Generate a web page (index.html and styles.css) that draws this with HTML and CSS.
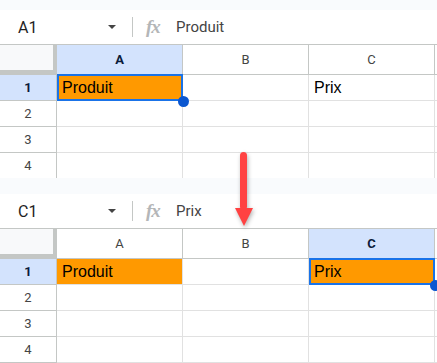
FILE: index.html
```html
<!DOCTYPE html>
<html lang="fr">
<head>
    <meta charset="UTF-8">
    <title>Feuille - sélection</title>
    <link rel="stylesheet" href="styles.css">
</head>
<body>
    <div class="sheet first">
        <div class="formulaBar">
            <div class="nameBox">A1<span class="caret"></span></div>
            <div class="sep"></div>
            <div class="fx">fx</div>
            <div class="formula">Produit</div>
        </div>
        <div class="grid">
            <div class="corner"></div>
            <div class="colHead active">A</div>
            <div class="colHead">B</div>
            <div class="colHead">C</div>
            <div class="colHead end"></div>

            <div class="rowHead active">1</div>
            <div class="cell orange sel">Produit</div>
            <div class="cell"></div>
            <div class="cell">Prix</div>
            <div class="cell end"></div>

            <div class="rowHead">2</div>
            <div class="cell"></div><div class="cell"></div><div class="cell"></div><div class="cell end"></div>
            <div class="rowHead">3</div>
            <div class="cell"></div><div class="cell"></div><div class="cell"></div><div class="cell end"></div>
            <div class="rowHead">4</div>
            <div class="cell"></div><div class="cell"></div><div class="cell"></div><div class="cell end"></div>
        </div>
    </div>

    <div class="sheet second">
        <div class="formulaBar">
            <div class="nameBox">C1<span class="caret"></span></div>
            <div class="sep"></div>
            <div class="fx">fx</div>
            <div class="formula">Prix</div>
        </div>
        <div class="grid">
            <div class="corner"></div>
            <div class="colHead">A</div>
            <div class="colHead">B</div>
            <div class="colHead active">C</div>
            <div class="colHead end"></div>

            <div class="rowHead active">1</div>
            <div class="cell orange">Produit</div>
            <div class="cell"></div>
            <div class="cell orange sel">Prix</div>
            <div class="cell end"></div>

            <div class="rowHead">2</div>
            <div class="cell"></div><div class="cell"></div><div class="cell"></div><div class="cell end"></div>
            <div class="rowHead">3</div>
            <div class="cell"></div><div class="cell"></div><div class="cell"></div><div class="cell end"></div>
            <div class="rowHead">4</div>
            <div class="cell"></div><div class="cell"></div><div class="cell"></div><div class="cell end"></div>
        </div>
    </div>

    <!-- flèche rouge entre les deux captures -->
    <svg class="arrow" width="24" height="84" viewBox="0 0 24 84">
        <rect x="8" y="4" width="7" height="58" rx="3.5" fill="#ff4242"/>
        <polygon points="3,60 21,60 12,78" fill="#ff4242"/>
    </svg>
</body>
</html>
```

FILE: styles.css
```css
body {
    margin: 0;
    background-color: #f9fbfd;
    font-family: Roboto, "Liberation Sans", Arial, sans-serif;
    color: #444;
    position: relative;
    width: 437px;
    height: 363px;
    overflow: hidden;
}
.sheet {
    background-color: #fff;
    overflow: hidden;
}
.sheet.first {
    margin-top: 10px;
    height: 168px;
}
.sheet.second {
    margin-top: 16px;
    height: 169px;
}
.formulaBar {
    height: 35px;
    box-sizing: border-box;
    border-bottom: 1px solid #c4c7c5;
    display: flex;
    align-items: center;
}
.nameBox {
    width: 132px;
    box-sizing: border-box;
    padding-left: 18px;
    font-size: 16px;
    color: #1f1f1f;
    display: flex;
    align-items: center;
}
.caret {
    margin-left: auto;
    margin-right: 16px;
    width: 0;
    height: 0;
    border-left: 4px solid transparent;
    border-right: 4px solid transparent;
    border-top: 4px solid #444;
}
.sep {
    width: 1px;
    height: 20px;
    background-color: #c4c7c5;
}
.fx {
    margin-left: 13px;
    width: 30px;
    font-family: "Liberation Serif", serif;
    font-style: italic;
    font-weight: bold;
    font-size: 19px;
    color: #b4b6b8;
    letter-spacing: -1px;
}
.formula {
    font-size: 15px;
    color: #444;
}
.grid {
    display: grid;
    grid-template-columns: 57px 126px 126px 126px 2px;
    grid-template-rows: 30px;
    grid-auto-rows: 26px;
}
.grid > div {
    box-sizing: border-box;
}
.corner {
    background-color: #f8f9fa;
    border-right: 4px solid #c4c7c5;
    border-bottom: 5px solid #c4c7c5;
}
.colHead {
    border-right: 1px solid #c4c7c5;
    border-bottom: 1px solid #c4c7c5;
    display: flex;
    align-items: center;
    justify-content: center;
    font-size: 13px;
}
.colHead.active {
    background-color: #d3e3fd;
    color: #0b1b3a;
    font-weight: bold;
}
.rowHead {
    border-right: 1px solid #c4c7c5;
    border-bottom: 1px solid #c4c7c5;
    display: flex;
    align-items: center;
    justify-content: center;
    font-size: 13px;
}
.rowHead.active {
    background-color: #d3e3fd;
    color: #0b1b3a;
    font-weight: bold;
}
.cell {
    border-right: 1px solid #e1e1e1;
    border-bottom: 1px solid #e1e1e1;
    font-family: "Liberation Sans", Arial, sans-serif;
    font-size: 16px;
    color: #000;
    padding-left: 5px;
    line-height: 25px;
    white-space: nowrap;
}
.end {
    border-right: none;
}
.cell.orange {
    background-color: #ff9900;
}
.cell.sel {
    position: relative;
}
.cell.sel::before {
    content: "";
    position: absolute;
    top: -1px;
    left: 0;
    right: -1px;
    bottom: -1px;
    border: 2px solid #1a73e8;
}
.cell.sel::after {
    content: "";
    position: absolute;
    right: -7px;
    bottom: -7px;
    width: 11px;
    height: 11px;
    border-radius: 50%;
    background-color: #0b57d0;
    z-index: 2;
}
.arrow {
    position: absolute;
    left: 232px;
    top: 148px;
    filter: drop-shadow(1px 2px 2px rgba(0, 0, 0, 0.3));
    z-index: 3;
}
```
